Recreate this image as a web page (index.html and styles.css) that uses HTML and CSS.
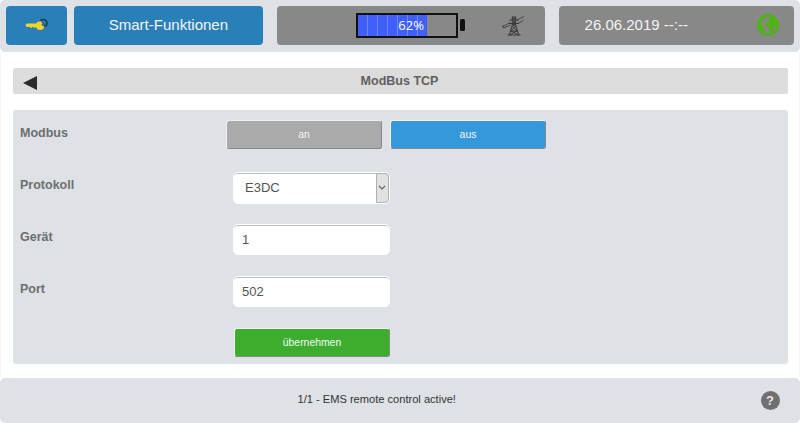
FILE: index.html
```
<!DOCTYPE html>
<html lang="de">
<head>
<meta charset="utf-8">
<title>ModBus TCP</title>
<link rel="stylesheet" href="styles.css">
</head>
<body>
<header class="top">
  <div class="tile key">
    <svg width="24" height="14" viewBox="0 0 24 14">
      <circle cx="18.3" cy="5.2" r="3.7" fill="none" stroke="#17364a" stroke-width="1.5"/>
      <path d="M2.3 5.6h10.2v3.4h-2v.8H8.8V9H7v.8H5.3V9h-3a1.7 1.7 0 0 1 0-3.4z" fill="#f5d327"/>
      <circle cx="15.2" cy="7.7" r="4.4" fill="#f5d327"/>
      <circle cx="18" cy="6.4" r="1.5" fill="#2980b9"/>
      <path d="M16.5 4q3.6 .4 2.6 4.6" fill="none" stroke="#17364a" stroke-width="1"/>
    </svg>
  </div>
  <div class="tile smart">Smart-Funktionen</div>
  <div class="tile status">
    <div class="battery"><div class="charge"></div><span class="percent">62%</span></div>
    <div class="cap"></div>
    <svg class="pylon" width="24" height="22" viewBox="0 0 24 22" fill="none" stroke="#383838" stroke-width="1">
      <path d="M10.3 2h3.4v8l3 10M10.3 2v8l-3 10M5.5 20h13M7.5 5h9M7 8.5h10M10.3 2l3.4 3-3.4 3.500 3.400 2.500-5 5h6.600l-5-5 3.400-2.500-3.400-3.500 3.400-3M8.500 15.500l8 4.500M15.500 15.500l-8 4.500"/>
      <path d="M1 11.500L8 7.500M1.500 13l7-3M15 5l7-3.500M16 8.500l5.500-3M1 10v3" stroke-width=".8"/>
    </svg>
  </div>
  <div class="tile clock">
    <span>26.06.2019 --:--</span>
    <svg width="24" height="24" viewBox="0 0 24 24">
      <circle cx="12" cy="12" r="9.8" fill="none" stroke="#4fb314" stroke-width="2.4"/>
      <path d="M13 4l5.5 1.500 3 5.500-1 3-3-1 .2 3.600-3.200 3.200-1.600-2.200.2-3-3.600-1-.4-3 3-2.200 2.600-.2-.6-1.500-2.100.6z" fill="#4fb314"/>
      <path d="M3 7l4-4 3 .5L7.500 7 5 9.500l-.2 3L8 15l.5 2.500L7.500 20 3 16z" fill="#4fb314"/>
    </svg>
  </div>
</header>
<main class="page">
  <div class="titlebar">
    <svg class="back" width="14" height="14" viewBox="0 0 14 14"><path d="M0 7L14 0v14z" fill="#2b2b2b"/></svg>
    <h1>ModBus TCP</h1>
  </div>
  <section class="panel">
    <div class="row">
      <span class="label">Modbus</span>
      <div class="toggle"><button class="btn off">an</button><button class="btn on">aus</button></div>
    </div>
    <div class="row">
      <span class="label">Protokoll</span>
      <div class="field select"><span>E3DC</span>
        <div class="arrow"><svg width="8" height="6" viewBox="0 0 8 6"><path d="M1 1l3 3 3-3" fill="none" stroke="#666" stroke-width="1.2"/></svg></div>
      </div>
    </div>
    <div class="row"><span class="label">Gerät</span><div class="field">1</div></div>
    <div class="row"><span class="label">Port</span><div class="field">502</div></div>
    <div class="row"><span class="label"></span><button class="btn apply">übernehmen</button></div>
  </section>
</main>
<footer class="bottom">
  <span>1/1 - EMS remote control active!</span>
  <div class="help">?</div>
</footer>
</body>
</html>
```
FILE: styles.css
```
* { box-sizing: border-box; }
body {
  margin: 0;
  width: 800px;
  height: 423px;
  overflow: hidden;
  background: #fff;
  font-family: "Liberation Sans", Arial, sans-serif;
}
.top {
  display: flex;
  height: 51.5px;
  padding: 5.5px 6px 0 5.5px;
  background: #dee1e6;
  border-radius: 5px;
}
.tile {
  display: flex;
  align-items: center;
  height: 39.3px;
  border-radius: 4px;
  background: #888;
  color: #f4f4f4;
}
.key { width: 61.7px; padding-left: 19.5px; background: #2980b9; }
.smart {
  width: 189.5px;
  margin-left: 6.5px;
  justify-content: center;
  padding-bottom: 1px;
  background: #2980b9;
  font-size: 15px;
}
.status { width: 267.5px; margin-left: 14px; padding-left: 79px; }
.battery {
  position: relative;
  width: 102px;
  height: 25px;
  border: 2px solid #111;
}
.charge {
  width: 69px;
  height: 100%;
  background: repeating-linear-gradient(90deg, #405fff 0 9px, #7286e8 9px 10px);
}
.percent {
  position: absolute;
  inset: 0;
  left: 8px;
  line-height: 20px;
  text-align: center;
  font-family: "Open Sans", sans-serif;
  font-size: 13px;
  font-weight: 500;
  color: #fff;
}
.cap { width: 5px; height: 12px; margin-left: 2px; background: #111; border-radius: 1.5px; }
.pylon { margin: 1px 0 0 37px; }
.clock {
  width: 235.5px;
  margin-left: 14px;
  padding: 0 14px 0 26px;
  justify-content: space-between;
}
.clock span { font-size: 15px; padding-bottom: 1px; }
.page {
  height: 326.5px;
  padding: 16px 12.5px 0;
  border: 1px solid #f3f4f6;
  border-width: 0 1px;
  border-radius: 5px;
}
.titlebar {
  display: flex;
  align-items: center;
  height: 26.5px;
  margin: 0 -1px;
  padding-left: 10px;
  border-radius: 2px;
  background: #dcdcdc;
}
.back { margin-top: 4px; }
.titlebar h1 {
  flex: 1;
  margin: 1px 25px 0 0;
  text-align: center;
  font-size: 12.5px;
  color: #606060;
}
.panel {
  height: 254px;
  margin: 16px -1px 0;
  padding: 10px 7.5px 0;
  border-radius: 3px;
  background: #dee1e6;
}
.row { display: flex; height: 52px; }
.label {
  width: 213px;
  padding-top: 6px;
  font-size: 12.5px;
  font-weight: bold;
  color: #6e6e6e;
}
.toggle { display: flex; gap: 8px; margin-left: -7px; }
.btn {
  width: 156px;
  height: 28.5px;
  padding: 0;
  border: 1px solid;
  border-color: #f0f2f4 #888 #888 #f0f2f4;
  border-radius: 3px;
  font: 10.4px "Liberation Sans", Arial, sans-serif;
  color: #f6f6f6;
}
.off { background: #aaa; }
.on { background: #3498db; }
.apply { background: #3dad2e; margin-left: 1px; }
.field {
  width: 157px;
  height: 31px;
  padding-left: 8px;
  border: 1px solid #fff;
  border-radius: 5px;
  box-shadow: inset 0 1px 0 #bbb;
  background: #fff;
  font-size: 13px;
  line-height: 29px;
  color: #555;
}
.select {
  display: flex;
  justify-content: space-between;
  height: 32px;
  padding-left: 11px;
}
.arrow {
  display: flex;
  align-items: center;
  justify-content: center;
  width: 13.5px;
  height: 30px;
  border: 1px solid #b0b0b0;
  border-radius: 1px 4px 4px 1px;
  background: #e1e1e1;
}
.bottom {
  display: flex;
  align-items: center;
  justify-content: space-between;
  height: 45px;
  padding: 0 20.5px 0 297.5px;
  border-radius: 5px;
  background: #dee1e6;
  font-size: 11.1px;
  color: #333;
}
.bottom span { padding-bottom: 3px; }
.help {
  width: 19px;
  height: 19px;
  border-radius: 50%;
  background: #707070;
  color: #e9e9e9;
  font: bold 13px/19px "Liberation Sans", sans-serif;
  text-align: center;
}
```
